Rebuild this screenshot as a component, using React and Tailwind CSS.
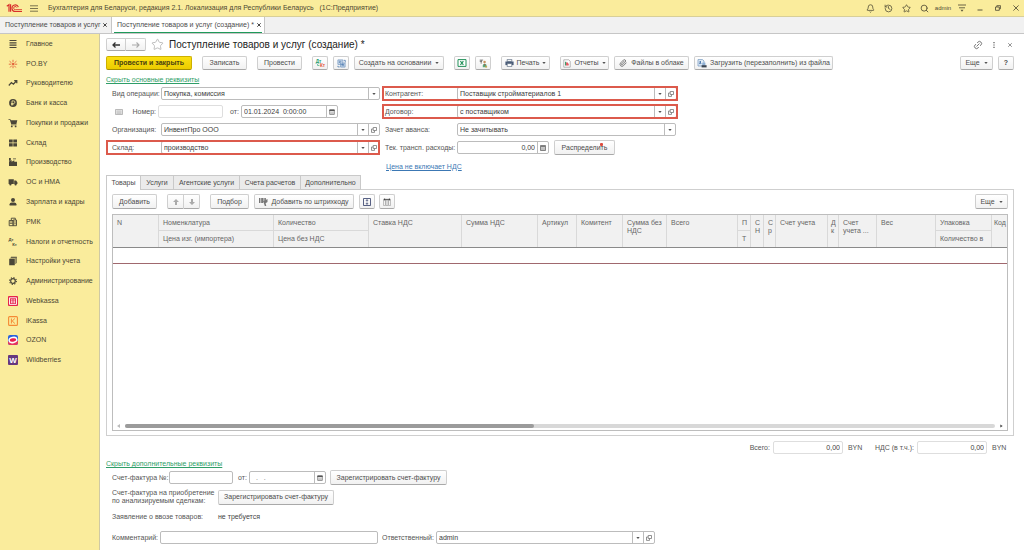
import React from 'react';
import { Bell, History, Star, Search, Link2, Paperclip } from 'lucide-react';

const btn =
  'flex shrink-0 items-center justify-center whitespace-nowrap rounded-[2px] border border-[#cfcfcf] border-b-[#a9a9a9] bg-linear-to-b from-white to-[#f1f1f1] text-[#4c4c4c]';
const field = 'flex h-[13px] overflow-hidden rounded-[2px] border border-[#bcbcbc] bg-white';
const input = 'min-w-0 flex-1 bg-transparent px-[2px] text-[#3c3c3c] outline-none placeholder:text-[#777]';
const side = 'flex w-[11px] shrink-0 items-center justify-center border-l border-[#bcbcbc]';

function Caret() {
  return (
    <svg viewBox="0 0 4 2" className="h-[2px] w-[4px] shrink-0" aria-hidden="true">
      <path d="M0.3 0h3.4L2 2z" fill="#555" />
    </svg>
  );
}

function OpenIcon() {
  return (
    <svg viewBox="0 0 6 6" className="size-[6px]" fill="none" stroke="#777" strokeWidth="0.8" aria-hidden="true">
      <path d="M2.2 0.5h3.3v3H2.2zM2.2 2H0.5v3.4h3V3.5" />
    </svg>
  );
}

function CalendarIcon() {
  return (
    <svg viewBox="0 0 6 6" className="size-[6px]" aria-hidden="true">
      <path d="M0.7 1h4.6v4.4H0.7z" fill="#eee" stroke="#666" strokeWidth="0.7" />
      <path d="M0.4 0.6h5.2v1.5H0.4z" fill="#555" />
      <path d="M1.5 3.2h3M1.5 4.3h3" stroke="#999" strokeWidth="0.5" />
    </svg>
  );
}

function CalcIcon() {
  return (
    <svg viewBox="0 0 6 6" className="size-[6px]" fill="none" stroke="#666" aria-hidden="true">
      <path d="M0.5 0.5h5v5h-5z" fill="#ddd" strokeWidth="0.8" />
      <path d="M1 1.6h4" strokeWidth="0.9" />
      <path d="M1.5 3.2h3M1.5 4.4h3" strokeWidth="0.6" strokeDasharray="0.7 0.5" />
    </svg>
  );
}

function Combo({ id, value, width, open = true }) {
  return (
    <div className={`${field} ${width}`}>
      <input id={id} defaultValue={value} className={input} />
      <button type="button" aria-label="Выбрать из списка" className={side}>
        <Caret />
      </button>
      {open && (
        <button type="button" aria-label="Открыть" className={side}>
          <OpenIcon />
        </button>
      )}
    </div>
  );
}

function Drop({ id, value, width }) {
  return (
    <div className={`${field} ${width} grid grid-cols-[1fr_11px]`}>
      <select
        id={id}
        className="col-span-2 col-start-1 row-start-1 min-w-0 appearance-none bg-transparent px-[2px] text-[#3c3c3c] outline-none"
      >
        <option>{value}</option>
      </select>
      <span className={`${side} pointer-events-none col-start-2 row-start-1`}>
        <Caret />
      </span>
    </div>
  );
}

const dark = '#4a4638';
const menu = [
  ['Главное', <path key="a" d="M1.5 1h7v1.1h-7zM1.5 3.3h7v1.1h-7zM1.5 5.6h7v1.1h-7zM1.5 7.9h7V9h-7z" fill={dark} />],
  [
    'PO.BY',
    <g key="a" stroke="#e0502f" strokeWidth="0.8" strokeLinecap="round">
      <path d="M5 1.2v1.6M5 7v1.8M1.8 2.4l1.4 1.2M8.2 2.4L6.8 3.6M1.2 5.2h1.6M7.2 5.2h1.6M2.4 8.2l1-1.2M7.6 8.2l-1-1.2" />
      <circle cx="5" cy="5" r="0.8" fill="#e0502f" />
    </g>,
  ],
  [
    'Руководителю',
    <path key="a" d="M0.8 7.5L3.4 4.6l2 1.6L8.3 3M6.2 2.6h2.6v2.6" fill="none" stroke={dark} strokeWidth="1.2" />,
  ],
  [
    'Банк и касса',
    <g key="a">
      <circle cx="5" cy="5" r="3.9" fill={dark} />
      <path d="M4 7.5V2.9h1.6a1.3 1.3 0 0 1 0 2.6H3.1M3.1 6.6h2.4" stroke="#faec9c" strokeWidth="0.8" fill="none" />
    </g>,
  ],
  [
    'Покупки и продажи',
    <g key="a" fill={dark}>
      <path d="M0.5 1.2h1.9l0.5 1h6.4L8.4 6H3.2L1.9 2H0.5zM3 6.5h5.6v0.8H3z" />
      <circle cx="3.8" cy="8.4" r="0.9" />
      <circle cx="7.6" cy="8.4" r="0.9" />
    </g>,
  ],
  [
    'Склад',
    <path key="a" d="M1 1.4h3.7v3.2H1zM5.3 1.4H9v3.2H5.3zM1 5.2h3.7v3.2H1zM5.3 5.2H9v3.2H5.3z" fill={dark} />,
  ],
  ['Производство', <path key="a" d="M1 9V4.5l2.6-1.4v1.6l2.7-1.5v1.6H9V9zM1 1h1.8v2.2L1 4zM5 1.5h3v0.8H5z" fill={dark} />],
  [
    'ОС и НМА',
    <g key="a" fill={dark}>
      <path d="M0.6 2.3h5.2v4.8H0.6zM6.2 3.4h1.9l1.3 1.8v1.9H6.2z" />
      <circle cx="2.4" cy="7.4" r="1.1" />
      <circle cx="7.6" cy="7.4" r="1.1" />
    </g>,
  ],
  [
    'Зарплата и кадры',
    <g key="a" fill={dark}>
      <circle cx="5" cy="3" r="2" />
      <path d="M1.6 8.6V7.2Q1.6 6 3.8 5.6h2.4Q8.4 6 8.4 7.2v1.4z" />
    </g>,
  ],
  [
    'РМК',
    <g key="a" fill="none" stroke={dark}>
      <path d="M1.2 3.5h3.9v5.2H1.2zM5.1 3h3.4v5.7H5.1zM3.3 3V1.2h4V3" strokeWidth="0.9" />
      <path d="M1.7 5h3M1.7 6.5h3M6 5h2M6 6.8h2" strokeWidth="0.7" />
    </g>,
  ],
  [
    'Налоги и отчетность',
    <g key="a" fill={dark} fontFamily="Liberation Sans, sans-serif" fontWeight="bold" fontSize="4.2">
      <text x="0.6" y="4">Дт</text>
      <text x="4.2" y="9">Кт</text>
    </g>,
  ],
  [
    'Настройки учета',
    <g key="a" fill={dark}>
      <path d="M3 0.8h5.8v6.4h-0.6V1.7H3zM1.2 2.8h5.6v6.4H1.2z" />
      <path d="M2.1 1.8h5.5v6.3h-0.5V2.3h-5z" />
    </g>,
  ],
  [
    'Администрирование',
    <g key="a" fill="none" stroke={dark}>
      <circle cx="5" cy="5" r="2.3" strokeWidth="1.2" />
      <circle cx="5" cy="5" r="3.4" strokeWidth="1.1" strokeDasharray="1.2 1.47" />
    </g>,
  ],
  [
    'Webkassa',
    <g key="a">
      <rect width="10" height="10" rx="1" fill="#e5254b" />
      <path d="M1.5 1.8h7v6.6h-7z" fill="none" stroke="#fff" strokeWidth="0.9" />
      <path d="M3.4 3.4v3.8M5 3.4v3.8M6.6 3.4v3.8" stroke="#fff" strokeWidth="1" strokeDasharray="1 0.4" />
    </g>,
  ],
  [
    'iKassa',
    <g key="a" fill="none" stroke="#f58a35">
      <rect x="0.6" y="0.6" width="8.8" height="8.8" rx="1" strokeWidth="1.1" />
      <path d="M3.4 2.5v5M6.9 2.5L4.2 5l2.7 2.5" strokeWidth="1" />
    </g>,
  ],
  [
    'OZON',
    <g key="a">
      <rect width="10" height="10" rx="2" fill="#2a62dc" />
      <path d="M0 6.5L10 6v2a2 2 0 0 1-2 2H2a2 2 0 0 1-2-2z" fill="#e6375f" />
      <ellipse cx="5" cy="5" rx="4.6" ry="3.3" fill="#fff" transform="rotate(-12 5 5)" />
      <ellipse cx="5" cy="5" rx="3.2" ry="1.7" fill="#e91e4d" transform="rotate(-8 5 5)" />
    </g>,
  ],
  [
    'Wildberries',
    <g key="a">
      <rect width="10" height="10" rx="1" fill="#66387f" />
      <text x="5" y="7.9" textAnchor="middle" fontFamily="Liberation Sans, sans-serif" fontWeight="bold" fontSize="8" fill="#fff">
        W
      </text>
    </g>,
  ],
];

function Logo() {
  return (
    <svg viewBox="0 0 16 10" className="h-[10px] w-[16px]" fill="none" stroke="#d8302b" aria-label="1С">
      <path d="M0.8 3.2L3 1.6v7.2M4.6 8.8V1.2" strokeWidth="1.2" />
      <path d="M12.4 4.2A3.3 3.3 0 1 0 9.3 8.5H16" strokeWidth="1.1" />
      <path d="M10.8 4.6A1.6 1.6 0 1 0 9.3 6.7H16" strokeWidth="0.9" />
    </svg>
  );
}

function TitleBar() {
  const item = 'flex w-[18px] shrink-0 items-center justify-center text-[#5b563c]';
  return (
    <header className="flex h-[17px] items-center border-b border-[#d8cf98] bg-[#faec9c] pl-[6px] text-[#4d4832]">
      <Logo />
      <button type="button" aria-label="Главное меню" className="ml-[8px]">
        <svg viewBox="0 0 8 7" className="h-[7px] w-[8px]" stroke="#5b563c" strokeWidth="0.8" aria-hidden="true">
          <path d="M0 0.8h8M0 3.5h8M0 6.2h8" />
        </svg>
      </button>
      <span className="ml-[10px] flex-1 whitespace-pre">
        Бухгалтерия для Беларуси, редакция 2.1. Локализация для Республики Беларусь   (1С:Предприятие)
      </span>
      <button type="button" aria-label="Уведомления" className={item}><Bell size={9} strokeWidth={2.2} /></button>
      <button type="button" aria-label="История" className={item}><History size={9} strokeWidth={2.2} /></button>
      <button type="button" aria-label="Избранное" className={item}><Star size={9} strokeWidth={2.2} /></button>
      <button type="button" aria-label="Поиск" className={item}><Search size={9} strokeWidth={2.4} /></button>
      <span className="w-[20px] text-center text-[6px]">admin</span>
      <button type="button" aria-label="Сервис" className={item}>
        <svg viewBox="0 0 8 8" className="size-[8px]" aria-hidden="true">
          <path d="M0 1h8M1 3.8h6" stroke="#5b563c" strokeWidth="0.9" />
          <path d="M2.5 5.8h3L4 7.8z" fill="#5b563c" />
        </svg>
      </button>
      <button type="button" aria-label="Свернуть" className={item}>
        <svg viewBox="0 0 6 6" className="size-[6px]" stroke="#5b563c" aria-hidden="true"><path d="M0.5 5h5" /></svg>
      </button>
      <button type="button" aria-label="Восстановить" className={item}>
        <svg viewBox="0 0 6 6" className="size-[6px]" fill="none" stroke="#5b563c" aria-hidden="true">
          <path d="M0.5 2h3.8v3.3H0.5zM1.8 2V0.7h3.8v3H4.3" strokeWidth="0.9" />
        </svg>
      </button>
      <button type="button" aria-label="Закрыть" className="flex w-[17px] shrink-0 items-center justify-center">
        <svg viewBox="0 0 6 6" className="size-[6px]" stroke="#5b563c" strokeWidth="0.9" aria-hidden="true"><path d="M0.4 0.4l5.2 5.2M5.6 0.4L0.4 5.6" /></svg>
      </button>
    </header>
  );
}

function Cross() {
  return (
    <svg viewBox="0 0 4 4" className="size-[4px]" stroke="#444" strokeWidth="1" aria-hidden="true">
      <path d="M0.3 0.3l3.4 3.4M3.7 0.3L0.3 3.7" />
    </svg>
  );
}

function WindowTabs() {
  return (
    <div className="flex h-[17px] border-b border-[#c6c6c6] bg-[#f1f1f1] text-[#4c4c4c]">
      <div className="flex w-[112px] items-center justify-between border-r border-[#c6c6c6] pl-[5px] pr-[4px]">
        <button type="button">Поступление товаров и услуг</button>
        <button type="button" aria-label="Закрыть вкладку"><Cross /></button>
      </div>
      <div className="flex w-[153px] border-r border-[#c6c6c6] bg-white px-[2px]">
        <div className="flex flex-1 items-center justify-between border-b border-[#1f9a5a] pl-[3px] pr-px">
          <button type="button">Поступление товаров и услуг (создание) *</button>
          <button type="button" aria-label="Закрыть вкладку"><Cross /></button>
        </div>
      </div>
    </div>
  );
}

function Sidebar() {
  return (
    <nav className="w-[100px] shrink-0 border-r border-[#cfc9a4] bg-[#faec9c]">
      <ul className="grid h-[336px] auto-rows-fr text-[#4a4635]">
        {menu.map(([label, icon]) => (
          <li key={label} className="flex">
            <a href="#" className="flex flex-1 items-center gap-[8px] whitespace-nowrap pl-[8px]">
              <svg viewBox="0 0 10 10" className="size-[10px] shrink-0" aria-hidden="true">{icon}</svg>
              {label}
            </a>
          </li>
        ))}
      </ul>
    </nav>
  );
}

function PageHeader() {
  return (
    <div className="flex h-[13px] items-center">
      <div className="flex">
        <button type="button" aria-label="Назад" className={`${btn} h-[13px] w-[20px] rounded-r-none`}>
          <svg viewBox="0 0 8 6" className="h-[6px] w-[8px]" fill="none" stroke="#333" strokeWidth="1.3" aria-hidden="true"><path d="M8 3H1M3.5 0.5L1 3l2.5 2.5" /></svg>
        </button>
        <button type="button" aria-label="Вперед" className={`${btn} h-[13px] w-[20px] rounded-l-none border-l-0`}>
          <svg viewBox="0 0 8 6" className="h-[6px] w-[8px]" fill="none" stroke="#aaa" strokeWidth="1.1" aria-hidden="true"><path d="M0 3h7M4.5 0.5L7 3 4.5 5.5" /></svg>
        </button>
      </div>
      <button type="button" aria-label="В избранное" className="ml-[5px] text-[#b5b5b5]">
        <Star size={13} strokeWidth={1.6} />
      </button>
      <h1 className="ml-[5px] flex-1 text-[10px] leading-[13px] text-[#222]">Поступление товаров и услуг (создание) *</h1>
      <div className="-mr-[4px] flex items-center text-[#666]">
        <button type="button" aria-label="Ссылка" className="flex w-[16px] justify-center"><Link2 size={10} className="-rotate-45" /></button>
        <button type="button" aria-label="Ещё" className="flex w-[16px] justify-center">
          <svg viewBox="0 0 2 6" className="h-[6px] w-[2px]" fill="#555" aria-hidden="true"><path d="M0.4 0h1.2v1.2H0.4zM0.4 2.4h1.2v1.2H0.4zM0.4 4.8h1.2V6H0.4z" /></svg>
        </button>
        <button type="button" aria-label="Закрыть" className="flex w-[16px] justify-center">
          <svg viewBox="0 0 4 4" className="size-[4px]" stroke="#666" strokeWidth="0.7" aria-hidden="true"><path d="M0.2 0.2l3.6 3.6M3.8 0.2L0.2 3.8" /></svg>
        </button>
      </div>
    </div>
  );
}

function DtKtIcon() {
  return (
    <svg viewBox="0 0 11 10" className="h-[10px] w-[11px]" fontFamily="Liberation Sans, sans-serif" fontWeight="bold" fontSize="4.6" aria-hidden="true">
      <text x="0.8" y="4.6" fill="#1d9a6c">Дт</text>
      <text x="5" y="8.8" fill="#e0523c">Кт</text>
      <path d="M2.6 5.8v1.7h1.8" fill="none" stroke="#1d9a6c" strokeWidth="0.6" />
    </svg>
  );
}

function StructureIcon() {
  return (
    <svg viewBox="0 0 10 10" className="size-[9px]" aria-hidden="true">
      <path d="M1 1h5.5v5H1zM4 4.5h5V9H4z" fill="#dbe6f3" stroke="#6d93bd" strokeWidth="0.8" />
      <path d="M2 2.5h3M2 4h2M5 6h3M5 7.5h3M7.5 1.5h1.7V4M1 7.5v1.3h2" fill="none" stroke="#3f6ea6" strokeWidth="0.8" />
    </svg>
  );
}

function ExcelIcon() {
  return (
    <svg viewBox="0 0 10 8" className="h-[8px] w-[10px]" aria-hidden="true">
      <path d="M1 0.6h8v6.8H1z" fill="#fff" stroke="#23915a" strokeWidth="1" />
      <path d="M3.4 2.1l3 3.8M6.4 2.1l-3 3.8" stroke="#23915a" strokeWidth="1.1" />
    </svg>
  );
}

function PersonIcon() {
  return (
    <svg viewBox="0 0 10 10" className="size-[9px]" aria-hidden="true">
      <path d="M0.8 1.2h3.8M0.8 2.6h2.6M2.4 1.2v4" stroke="#555" strokeWidth="0.8" />
      <circle cx="6.2" cy="3.4" r="1.4" fill="#c9925e" />
      <path d="M4.2 9.3V7Q4.2 5.2 6.3 5.2T8.4 7v2.3z" fill="#5aa77c" />
      <path d="M6.3 5.4v1.8" stroke="#d43b2f" strokeWidth="0.8" />
      <path d="M7 8h2v1.4H7z" fill="#c9a13b" />
    </svg>
  );
}

function PrintIcon() {
  return (
    <svg viewBox="0 0 9 8" className="h-[8px] w-[9px] shrink-0" aria-hidden="true">
      <path d="M2.2 0.4h4.6v2H2.2z" fill="#fff" stroke="#5a6a80" strokeWidth="0.7" />
      <path d="M0.4 2.5h8.2v3.6H0.4z" fill="#4b5d78" />
      <path d="M2.2 4.6h4.6v3H2.2z" fill="#fff" stroke="#5a6a80" strokeWidth="0.7" />
    </svg>
  );
}

function ReportIcon() {
  return (
    <svg viewBox="0 0 8 9" className="h-[9px] w-[8px]" aria-hidden="true">
      <path d="M0.8 0.8h5l1.4 1.4v6H0.8z" fill="#fff" stroke="#999" strokeWidth="0.7" />
      <path d="M2 2.8h1.3v3.6H2z" fill="#3f9b6b" />
      <path d="M3.3 3.6h1.5v2.8H3.3z" fill="#e0303c" />
      <path d="M4.8 4.4h1v2h-1z" fill="#e8616a" />
    </svg>
  );
}

function LoadIcon() {
  return (
    <svg viewBox="0 0 10 9" className="h-[9px] w-[10px]" aria-hidden="true">
      <path d="M1 0.6h4.5L7 2v5H1z" fill="#e3edf7" stroke="#6d93bd" strokeWidth="0.7" />
      <path d="M2 3h2M2 4.6h2.4M3.5 2v2" stroke="#3f6ea6" strokeWidth="0.8" />
      <path d="M5.2 3.6h3.2v2.6H5.2z" fill="#8fb0d4" />
      <path d="M4.6 6.2h5v2.2h-5z" fill="#3b4654" />
    </svg>
  );
}

function Toolbar() {
  return (
    <div className="flex h-[14px] items-stretch gap-[10px]">
      <button type="button" className="flex w-[86px] shrink-0 items-center justify-center whitespace-nowrap rounded-[2px] border border-[#cdb000] border-b-[#a48d00] bg-linear-to-b from-[#fbe011] to-[#eccc00] font-bold text-[#4a4210]">
        Провести и закрыть
      </button>
      <button type="button" className={`${btn} w-[45px]`}>Записать</button>
      <button type="button" className={`${btn} w-[45px]`}>Провести</button>
      <div className="flex gap-[5px]">
        <button type="button" aria-label="Дт/Кт" className={`${btn} w-[16px]`}><DtKtIcon /></button>
        <button type="button" aria-label="Структура подчиненности" className={`${btn} w-[16px]`}><StructureIcon /></button>
        <button type="button" className={`${btn} w-[90px] gap-[4px]`}>Создать на основании <Caret /></button>
      </div>
      <div className="flex gap-[5px]">
        <button type="button" aria-label="Excel" className={`${btn} w-[16px]`}><ExcelIcon /></button>
        <button type="button" aria-label="Контакты" className={`${btn} w-[16px]`}><PersonIcon /></button>
      </div>
      <button type="button" className={`${btn} w-[49px] gap-[3px]`}><PrintIcon />Печать <Caret /></button>
      <div className="flex gap-[5px]">
        <button type="button" className={`${btn} w-[49px] gap-[3px]`}><ReportIcon />Отчеты <Caret /></button>
        <button type="button" className={`${btn} w-[75px] gap-[4px]`}><Paperclip size={8} color="#666" strokeWidth={2.4} />Файлы в облаке</button>
        <button type="button" className={`${btn} w-[139px] gap-[3px]`}><LoadIcon />Загрузить (перезаполнить) из файла</button>
      </div>
      <div className="ml-auto flex gap-[5px]">
        <button type="button" className={`${btn} w-[33px] gap-[4px]`}>Еще <Caret /></button>
        <button type="button" aria-label="Справка" className={`${btn} w-[16px] font-bold`}>?</button>
      </div>
    </div>
  );
}

const row = 'flex h-[15px] items-center';
const marked = 'outline outline-2 -outline-offset-2 outline-[#dc5a4c]';

function MainFields() {
  return (
    <div className="flex gap-[2px] text-[#555]">
      <div className="flex w-[274px] flex-col gap-[3px]">
        <div className={row}>
          <label htmlFor="kind" className="w-[55px] shrink-0 pl-[6px]">Вид операции:</label>
          <Drop id="kind" value="Покупка, комиссия" width="w-[219px]" />
        </div>
        <div className={row}>
          <svg viewBox="0 0 8 6" className="ml-[9px] h-[6px] w-[8px]" aria-hidden="true">
            <path d="M0.5 0.5h7v5h-7z" fill="#eee" stroke="#aaa" strokeWidth="0.8" />
            <path d="M1.5 2h5M1.5 3.2h5M1.5 4.4h5" stroke="#aaa" strokeWidth="0.6" />
          </svg>
          <label htmlFor="number" className="w-[35px] shrink-0 pr-[2px] text-right">Номер:</label>
          <div className={`${field} w-[65px] border-[#dedede]`}><input id="number" className={input} /></div>
          <label htmlFor="date" className="w-[16px] shrink-0 text-right">от:</label>
          <div className={`${field} ml-[2px] w-[97px]`}>
            <input id="date" defaultValue="01.01.2024  0:00:00" className={input} />
            <button type="button" aria-label="Календарь" className={side}><CalendarIcon /></button>
          </div>
        </div>
        <div className={row}>
          <label htmlFor="org" className="w-[55px] shrink-0 pl-[6px]">Организация:</label>
          <Combo id="org" value="ИнвентПро ООО" width="w-[219px]" />
        </div>
        <div className={`${row} ${marked}`}>
          <label htmlFor="store" className="w-[55px] shrink-0 pl-[6px]">Склад:</label>
          <Combo id="store" value="производство" width="w-[219px]" />
        </div>
      </div>
      <div className="flex w-[296px] flex-col gap-[3px]">
        <div className={`${row} ${marked}`}>
          <label htmlFor="partner" className="w-[75px] shrink-0 pl-[3px]">Контрагент:</label>
          <Combo id="partner" value="Поставщик стройматериалов 1" width="w-[220px]" />
        </div>
        <div className={`${row} ${marked}`}>
          <label htmlFor="contract" className="w-[75px] shrink-0 pl-[3px]">Договор:</label>
          <Combo id="contract" value="с поставщиком" width="w-[220px]" />
        </div>
        <div className={row}>
          <label htmlFor="advance" className="w-[75px] shrink-0 pl-[3px]">Зачет аванса:</label>
          <Drop id="advance" value="Не зачитывать" width="w-[219px]" />
        </div>
        <div className={row}>
          <label htmlFor="transport" className="w-[75px] shrink-0 whitespace-nowrap pl-[3px]">Тек. трансп. расходы:</label>
          <div className={`${field} w-[92px]`}>
            <input id="transport" defaultValue="0,00" className={`${input} text-right`} />
            <button type="button" aria-label="Калькулятор" className={side}><CalcIcon /></button>
          </div>
          <button type="button" className={`${btn} relative ml-[5px] h-[15px] w-[61px]`}>
            Распределить
            <span className="absolute right-[11px] top-[2px] size-[3px] rounded-[1px] bg-[#dd4a3e]" />
          </button>
        </div>
        <div className={row}>
          <a href="#" className="ml-[4px] mt-[2px] text-[#3c78b4] underline">Цена не включает НДС</a>
        </div>
      </div>
    </div>
  );
}

function Th({ children, className = 'px-[4px]', ...rest }) {
  return (
    <th {...rest} className={`overflow-hidden border-r border-[#d9d9d9] pt-[4px] text-left align-top font-normal leading-[8px] ${className}`}>
      {children}
    </th>
  );
}

function GoodsTable() {
  return (
    <div className="flex min-h-[217px] flex-1 flex-col overflow-hidden border border-[#bdbdbd] bg-white">
      <table className="w-full table-fixed border-separate border-spacing-0 text-[#666]">
        <colgroup>
          <col className="w-[46px]" /><col className="w-[115px]" /><col className="w-[95px]" />
          <col className="w-[93px]" /><col className="w-[76px]" /><col className="w-[39px]" />
          <col className="w-[46px]" /><col className="w-[44px]" /><col className="w-[71px]" />
          <col className="w-[13px]" /><col className="w-[13px]" /><col className="w-[12px]" />
          <col className="w-[52px]" /><col className="w-[11px]" /><col className="w-[38px]" />
          <col className="w-[59px]" /><col className="w-[56px]" /><col />
        </colgroup>
        <thead className="bg-[#f1f1f1]">
          <tr className="h-[16px]">
            <Th rowSpan={2}>N</Th>
            <Th className="border-b px-[4px]">Номенклатура</Th>
            <Th className="border-b px-[4px]">Количество</Th>
            <Th rowSpan={2}>Ставка НДС</Th>
            <Th rowSpan={2}>Сумма НДС</Th>
            <Th rowSpan={2}>Артикул</Th>
            <Th rowSpan={2}>Комитент</Th>
            <Th rowSpan={2}>Сумма без НДС</Th>
            <Th rowSpan={2}>Всего</Th>
            <Th className="border-b px-[4px]">П</Th>
            <Th rowSpan={2}>С<br />Н</Th>
            <Th rowSpan={2}>С<br />р</Th>
            <Th rowSpan={2}>Счет учета</Th>
            <Th rowSpan={2} className="px-[3px]">Д<br />к</Th>
            <Th rowSpan={2}>Счет<br />учета ...</Th>
            <Th rowSpan={2}>Вес</Th>
            <Th className="border-b px-[4px]">Упаковка</Th>
            <Th rowSpan={2} className="border-r-0 pl-[2px]">Код</Th>
          </tr>
          <tr className="h-[16px]">
            <Th>Цена изг. (импортера)</Th>
            <Th>Цена без НДС</Th>
            <Th>Т</Th>
            <Th className="whitespace-nowrap px-[4px]">Количество в</Th>
          </tr>
        </thead>
        <tbody>
          <tr>
            <td colSpan={18} className="h-[17px] border-b border-t border-b-[#a0686e] border-t-[#8a8a8a]" />
          </tr>
        </tbody>
      </table>
      <div className="mb-[2px] mt-auto flex h-[4px] items-center gap-[5px] px-[4px]">
        <svg viewBox="0 0 3 4" className="h-[4px] w-[3px]" aria-hidden="true"><path d="M3 0v4L0 2z" fill="#bbb" /></svg>
        <div className="h-[4px] flex-1 rounded-[2px] bg-[#d8d8d8]">
          <div className="h-[4px] w-[47%] rounded-[2px] bg-[#9b9b9b]" />
        </div>
        <svg viewBox="0 0 3 4" className="h-[4px] w-[3px]" aria-hidden="true"><path d="M0.3 0.4v3.2L2.7 2z" fill="#444" /></svg>
      </div>
    </div>
  );
}

const tabs = [
  ['Товары', 'w-[35px]'],
  ['Услуги', 'w-[33px]'],
  ['Агентские услуги', 'w-[66px]'],
  ['Счета расчетов', 'w-[61px]'],
  ['Дополнительно', 'w-[60px]'],
];

function GoodsPanel() {
  return (
    <section className="flex flex-1 flex-col">
      <div role="tablist" className="z-10 flex h-[15px] text-[#4c4c4c]">
        {tabs.map(([t, w], i) => (
          <button
            key={t}
            type="button"
            role="tab"
            aria-selected={i === 0}
            className={`${w} shrink-0 whitespace-nowrap border-r border-t border-[#c9c9c9] ${i === 0 ? 'border-l bg-white' : 'border-b bg-[#ebebeb]'}`}
          >
            {t}
          </button>
        ))}
      </div>
      <div className="-mt-px flex flex-1 flex-col border border-[#cfcfcf] px-[5px] pb-[4px] pt-[4px]">
        <div className="mb-[5px] flex h-[15px] items-stretch">
          <button type="button" className={`${btn} w-[45px]`}>Добавить</button>
          <div className="ml-[10px] flex">
            <button type="button" aria-label="Вверх" className={`${btn} w-[17px] rounded-r-none`}>
              <svg viewBox="0 0 6 6" className="size-[6px]" aria-hidden="true"><path d="M3 0l3 3H4v3H2V3H0z" fill="#aaa" /></svg>
            </button>
            <button type="button" aria-label="Вниз" className={`${btn} w-[16px] rounded-l-none border-l-0`}>
              <svg viewBox="0 0 6 6" className="size-[6px]" aria-hidden="true"><path d="M3 6l3-3H4V0H2v3H0z" fill="#aaa" /></svg>
            </button>
          </div>
          <button type="button" className={`${btn} ml-[10px] w-[39px]`}>Подбор</button>
          <button type="button" className={`${btn} ml-[5px] w-[100px] gap-[3px]`}>
            <svg viewBox="0 0 9 8" className="h-[8px] w-[9px]" aria-hidden="true">
              <path d="M0.6 0v5M2.2 0v5M3.4 0v5M5 0v4M6.3 0v3" stroke="#444" strokeWidth="0.8" />
              <path d="M4 3.5L8.5 1v3L6.6 5.2 7.3 8H5.8L5 5.5z" fill="#777" />
            </svg>
            Добавить по штрихкоду
          </button>
          <button type="button" aria-label="Развернуть" className={`${btn} ml-[5px] w-[16px]`}>
            <svg viewBox="0 0 8 8" className="size-[8px]" fill="none" stroke="#2f3a66" aria-hidden="true">
              <path d="M0.5 0.5h7v7h-7z" strokeWidth="0.8" />
              <path d="M4 1.7v1.8M4 4.5v1.8M3.1 2.7L4 1.7l0.9 1M3.1 5.3L4 6.3l0.9-1" strokeWidth="0.8" />
            </svg>
          </button>
          <button type="button" aria-label="Колонки" className={`${btn} ml-[4px] w-[16px]`}>
            <svg viewBox="0 0 8 8" className="size-[8px]" aria-hidden="true">
              <path d="M0.5 2h2v5.5h-2zM3 2h2v5.5H3zM5.5 2h2v5.5h-2z" fill="#f2f2f2" stroke="#888" strokeWidth="0.5" />
              <path d="M0.6 1.4h6.8M1.6 0.5v1.8M6.4 0.5v1.8" stroke="#333" strokeWidth="0.8" />
            </svg>
          </button>
          <button type="button" className={`${btn} ml-auto w-[33px] gap-[4px]`}>Еще <Caret /></button>
        </div>
        <GoodsTable />
      </div>
    </section>
  );
}

function Footer() {
  return (
    <div className="text-[#555]">
      <div className="mt-[5px] flex items-center justify-end pr-[7px]">
        <label htmlFor="total">Всего:</label>
        <div className={`${field} ml-[3px] w-[70px] border-[#dedede]`}><input id="total" defaultValue="0,00" className={`${input} text-right`} /></div>
        <span className="ml-[5px] w-[15px]">BYN</span>
        <label htmlFor="vat" className="ml-[12px]">НДС (в т.ч.):</label>
        <div className={`${field} ml-[3px] w-[70px] border-[#dedede]`}><input id="vat" defaultValue="0,00" className={`${input} text-right`} /></div>
        <span className="ml-[5px] w-[15px]">BYN</span>
      </div>
      <a href="#" className="mt-[5px] inline-block leading-[10px] text-[#2f9e68] underline">Скрыть дополнительные реквизиты</a>
      <div className="mt-px flex h-[15px] items-center pl-[6px]">
        <label htmlFor="invoice" className="w-[57px] shrink-0 whitespace-nowrap">Счет-фактура №:</label>
        <div className={`${field} w-[64px]`}><input id="invoice" className={input} /></div>
        <label htmlFor="invoiceDate" className="w-[16px] shrink-0 pl-[5px]">от:</label>
        <div className={`${field} w-[77px]`}>
          <input id="invoiceDate" placeholder="  .   ." className={input} />
          <button type="button" aria-label="Календарь" className={side}><CalendarIcon /></button>
        </div>
        <button type="button" className={`${btn} ml-[4px] h-[15px] w-[117px]`}>Зарегистрировать счет-фактуру</button>
      </div>
      <div className="mt-[4px] flex items-center pl-[6px]">
        <span className="w-[106px] leading-[8px]">Счет-фактура на приобретение<br />по анализируемым сделкам:</span>
        <button type="button" className={`${btn} h-[15px] w-[116px]`}>Зарегистрировать счет-фактуру</button>
      </div>
      <div className="mt-[7px] flex pl-[6px] leading-[10px]">
        <span className="w-[106px]">Заявление о ввозе товаров:</span>
        <span className="text-[#444]">не требуется</span>
      </div>
      <div className="mt-[9px] flex items-center pl-[6px]">
        <label htmlFor="comment" className="w-[48px] shrink-0">Комментарий:</label>
        <div className={`${field} w-[218px]`}><input id="comment" className={input} /></div>
        <label htmlFor="owner" className="ml-[4px] w-[54px] shrink-0">Ответственный:</label>
        <Combo id="owner" value="admin" width="w-[219px]" />
      </div>
    </div>
  );
}

export default function App() {
  return (
    <div className="flex min-h-screen flex-col bg-white font-['Liberation_Sans',Arial,sans-serif] text-[7px] leading-[10px]">
      <TitleBar />
      <WindowTabs />
      <div className="flex flex-1">
        <Sidebar />
        <main className="flex min-w-0 flex-1 flex-col pb-[6px] pl-[6px] pr-[10px] pt-[4px]">
          <PageHeader />
          <div className="mt-[5px]"><Toolbar /></div>
          <div className="mt-[5px] h-[11px]">
            <a href="#" className="text-[#2f9e68] underline">Скрыть основные реквизиты</a>
          </div>
          <div className="mb-[2px]"><MainFields /></div>
          <GoodsPanel />
          <Footer />
        </main>
      </div>
    </div>
  );
}
